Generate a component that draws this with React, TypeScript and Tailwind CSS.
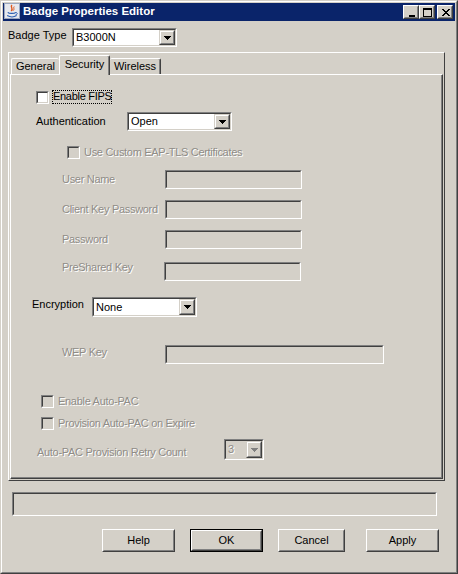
import React from "react";

const DIS = "text-[#8f8c87] tracking-[-0.3px] [text-shadow:1px_1px_0_#ffffff]";

function Sunken({ className = "", inner = "", children }: { className?: string; inner?: string; children?: React.ReactNode }) {
  return (
    <div className={`border border-t-[#808080] border-l-[#808080] border-r-white border-b-white shrink-0 ${className}`}>
      <div className={`h-full w-full border border-t-[#404040] border-l-[#404040] border-r-[#d4d0c8] border-b-[#d4d0c8] ${inner}`}>{children}</div>
    </div>
  );
}

function Arrow({ color }: { color: string }) {
  return (
    <svg width="7" height="4" viewBox="0 0 7 4" shapeRendering="crispEdges">
      <rect x="0" y="0" width="7" height="1" fill={color} />
      <rect x="1" y="1" width="5" height="1" fill={color} />
      <rect x="2" y="2" width="3" height="1" fill={color} />
      <rect x="3" y="3" width="1" height="1" fill={color} />
    </svg>
  );
}

function Combo({ className, text, disabled }: { className: string; text: string; disabled?: boolean }) {
  return (
    <Sunken className={className} inner={`flex ${disabled ? "bg-[#d4d0c8]" : "bg-white"}`}>
      <span className={`flex-1 flex items-center pl-[2px] ${disabled ? DIS : ""}`}>{text}</span>
      <div className="w-[16px] h-full border border-t-[#d4d0c8] border-l-[#d4d0c8] border-r-[#404040] border-b-[#404040]">
        <div className="w-full h-full border border-t-white border-l-white border-r-[#808080] border-b-[#808080] bg-[#d4d0c8] flex items-center justify-center">
          <Arrow color={disabled ? "#808080" : "#000000"} />
        </div>
      </div>
    </Sunken>
  );
}

function Check({ disabled }: { disabled?: boolean }) {
  return <Sunken className="w-[13px] h-[13px]" inner={disabled ? "bg-[#d4d0c8]" : "bg-white"} />;
}

function Field({ className }: { className: string }) {
  return <Sunken className={className} inner="bg-[#d4d0c8]" />;
}

function Button({ label, w, def }: { label: string; w: string; def?: boolean }) {
  const core = (
    <div className="w-full h-full border border-t-white border-l-white border-r-[#404040] border-b-[#404040]">
      <div className="w-full h-full border border-t-[#d4d0c8] border-l-[#d4d0c8] border-r-[#808080] border-b-[#808080] flex items-center justify-center">
        {label}
      </div>
    </div>
  );
  return <div className={`${w} h-[23px] shrink-0 ${def ? "border border-black" : ""}`}>{core}</div>;
}

function TitleBtn({ kind }: { kind: "min" | "max" | "close" }) {
  return (
    <div className="w-[16px] h-[14px] border border-t-white border-l-white border-r-[#404040] border-b-[#404040]">
      <div className="w-full h-full border border-t-[#d4d0c8] border-l-[#d4d0c8] border-r-[#808080] border-b-[#808080] bg-[#d4d0c8] relative">
        <svg width="12" height="10" viewBox="0 0 12 10" shapeRendering="crispEdges" className="absolute left-[1px] top-[1px]">
          {kind === "min" && <rect x="3" y="7" width="6" height="2" fill="#000" />}
          {kind === "max" && (
            <g fill="#000">
              <rect x="1" y="0" width="9" height="2" />
              <rect x="1" y="0" width="1" height="9" />
              <rect x="9" y="0" width="1" height="9" />
              <rect x="1" y="8" width="9" height="1" />
            </g>
          )}
          {kind === "close" && (
            <g fill="#000">
              <rect x="2" y="1" width="2" height="1" /><rect x="8" y="1" width="2" height="1" />
              <rect x="3" y="2" width="2" height="1" /><rect x="7" y="2" width="2" height="1" />
              <rect x="4" y="3" width="4" height="1" />
              <rect x="5" y="4" width="2" height="1" />
              <rect x="4" y="5" width="4" height="1" />
              <rect x="3" y="6" width="2" height="1" /><rect x="7" y="6" width="2" height="1" />
              <rect x="2" y="7" width="2" height="1" /><rect x="8" y="7" width="2" height="1" />
            </g>
          )}
        </svg>
      </div>
    </div>
  );
}

function JavaIcon() {
  return (
    <svg width="16" height="16" viewBox="0 0 16 16" className="ml-[1px] mb-[2px] shrink-0">
      <rect x="0.5" y="0.5" width="15" height="15" fill="#e6e8ee" stroke="#9aa6bf" />
      <path d="M8 2 C5.5 4, 10 5, 7.2 8" stroke="#e0561a" strokeWidth="1.4" fill="none" />
      <path d="M10.2 3.5 C9 5, 10.8 6, 9.3 7.6" stroke="#e0561a" strokeWidth="1" fill="none" />
      <path d="M3.8 9.3 C5 10.8, 10.5 10.8, 11.8 9.3" stroke="#2a5db0" strokeWidth="1.2" fill="none" />
      <path d="M3.2 12.6 C6 14.2, 10 14.2, 12.6 12.6" stroke="#2a5db0" strokeWidth="1.2" fill="none" />
      <path d="M11.6 9.6 C13.8 9.3, 13.8 11.6, 11.6 11.9" stroke="#2a5db0" strokeWidth="1" fill="none" />
    </svg>
  );
}

function Tab({ label, w, selected, noLeft, noRight }: { label: string; w: string; selected?: boolean; noLeft?: boolean; noRight?: boolean }) {
  return (
    <div
      className={`${w} ${selected ? "h-[20px] -mb-[1px] pb-[3px]" : "h-[16px]"} shrink-0 bg-[#d4d0c8] border-t border-t-white ${
        noLeft ? "" : "border-l border-l-white"
      } ${noRight ? "" : "border-r border-r-[#404040] shadow-[inset_-1px_0_0_#808080]"} rounded-tl-[2px] rounded-tr-[2px] flex items-center justify-center`}
    >
      {label}
    </div>
  );
}

export default function App() {
  return (
    <div className="w-[458px] h-[574px] bg-[#d4d0c8] border border-t-[#d4d0c8] border-l-[#d4d0c8] border-r-[#404040] border-b-[#404040] font-['Liberation_Sans',Arial,sans-serif] text-[11px] leading-none text-black select-none">
      <div className="h-full border border-t-white border-l-white border-r-[#808080] border-b-[#808080] p-[1px] flex flex-col">
        {/* Title bar */}
        <div className="h-[18px] bg-[#0a246a] flex items-center shrink-0">
          <JavaIcon />
          <span className="ml-[3px] text-white font-bold text-[11.5px]">Badge Properties Editor</span>
          <div className="ml-auto mr-[2px] flex items-center">
            <TitleBtn kind="min" />
            <TitleBtn kind="max" />
            <div className="w-[2px]" />
            <TitleBtn kind="close" />
          </div>
        </div>

        <div className="flex flex-col pl-[5px]">
          {/* Badge type */}
          <div className="mt-[7px] h-[19px] flex items-center">
            <span className="w-[64px] mb-[4px]">Badge Type</span>
            <Combo className="w-[105px] h-[19px]" text="B3000N" />
          </div>

          {/* Outer panel */}
          <div className="mt-[5px] w-[437px] h-[429px] border border-t-white border-l-white border-r-[#404040] border-b-[#404040] pt-[2px] px-[1px] pb-[1px] flex flex-col">
            <div className="h-[19px] flex items-end pl-[1px] relative z-10 shrink-0">
              <Tab label="General" w="w-[48px]" noRight />
              <Tab label="Security" w="w-[51px]" selected />
              <Tab label="Wireless" w="w-[51px]" noLeft />
            </div>
            <div className="flex-1 border border-t-white border-l-white border-r-[#404040] border-b-[#404040] shadow-[inset_-1px_-1px_0_#808080] flex flex-col">
              {/* Enable FIPS */}
              <div className="mt-[15px] h-[14px] ml-[25px] flex items-start">
                <div className="mt-[1px]"><Check /></div>
                <span className="ml-[3px] h-[14px] border border-dotted border-black flex items-center pb-[1px] tracking-[-0.3px]">Enable FIPS</span>
              </div>
              {/* Authentication */}
              <div className="mt-[8px] h-[19px] ml-[25px] flex items-center">
                <span className="w-[91px]">Authentication</span>
                <Combo className="w-[105px] h-[19px]" text="Open" />
              </div>
              {/* EAP-TLS */}
              <div className="mt-[15px] h-[13px] ml-[56px] flex items-center">
                <Check disabled />
                <span className={`ml-[4px] ${DIS}`}>Use Custom EAP-TLS Certificates</span>
              </div>
              {/* Fields */}
              <div className="mt-[11px] h-[19px] ml-[51px] flex items-center">
                <span className={`w-[103px] ${DIS}`}>User Name</span>
                <Field className="w-[137px] h-[19px]" />
              </div>
              <div className="mt-[11px] h-[19px] ml-[51px] flex items-center">
                <span className={`w-[103px] ${DIS}`}>Client Key Password</span>
                <Field className="w-[137px] h-[19px]" />
              </div>
              <div className="mt-[11px] h-[19px] ml-[51px] flex items-center">
                <span className={`w-[103px] ${DIS}`}>Password</span>
                <Field className="w-[137px] h-[19px]" />
              </div>
              <div className="mt-[13px] h-[19px] ml-[51px] flex items-center">
                <span className={`w-[102px] mb-[8px] ${DIS}`}>PreShared Key</span>
                <Field className="w-[137px] h-[19px]" />
              </div>
              {/* Encryption */}
              <div className="mt-[16px] h-[20px] ml-[21px] flex items-center">
                <span className="w-[60px] mb-[6px]">Encryption</span>
                <Combo className="w-[105px] h-[20px]" text="None" />
              </div>
              {/* WEP key */}
              <div className="mt-[28px] h-[19px] ml-[51px] flex items-center">
                <span className={`w-[103px] mb-[4px] ${DIS}`}>WEP Key</span>
                <Field className="w-[219px] h-[19px]" />
              </div>
              {/* Auto-PAC */}
              <div className="mt-[31px] h-[13px] ml-[30px] flex items-center">
                <Check disabled />
                <span className={`ml-[4px] ${DIS}`}>Enable Auto-PAC</span>
              </div>
              <div className="mt-[9px] h-[13px] ml-[30px] flex items-center">
                <Check disabled />
                <span className={`ml-[4px] ${DIS}`}>Provision Auto-PAC on Expire</span>
              </div>
              <div className="mt-[9px] h-[21px] ml-[26px] flex items-center">
                <span className={`w-[187px] mt-[6px] ${DIS}`}>Auto-PAC Provision Retry Count</span>
                <Combo className="w-[40px] h-[21px]" text="3" disabled />
              </div>
            </div>
          </div>

          {/* Status field */}
          <div className="mt-[11px] ml-[4px]">
            <Sunken className="w-[425px] h-[24px]" inner="bg-[#d4d0c8]" />
          </div>

          {/* Buttons */}
          <div className="mt-[13px] flex">
            <div className="ml-[94px]"><Button label="Help" w="w-[73px]" /></div>
            <div className="ml-[15px]"><Button label="OK" w="w-[73px]" def /></div>
            <div className="ml-[15px]"><Button label="Cancel" w="w-[67px]" /></div>
            <div className="ml-[21px]"><Button label="Apply" w="w-[73px]" /></div>
          </div>
        </div>
      </div>
    </div>
  );
}
